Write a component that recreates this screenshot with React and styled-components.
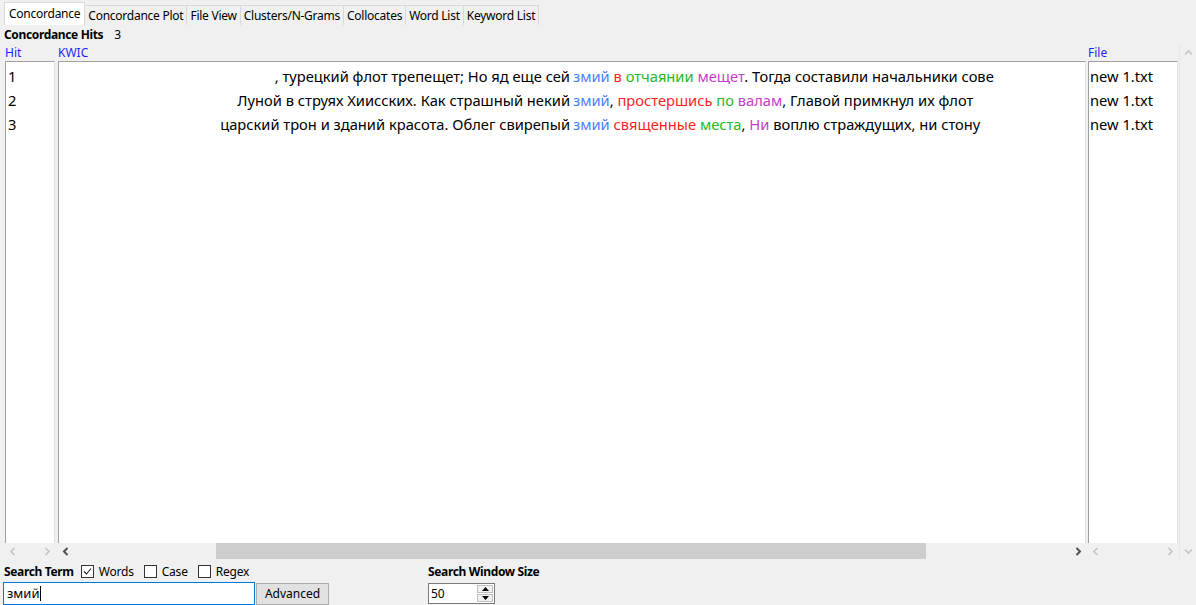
import React from "react";
import styled, { createGlobalStyle } from "styled-components";

const GlobalStyle = createGlobalStyle`
  html, body {
    margin: 0;
    padding: 0;
    background: #f0f0f0;
  }
  body {
    font-family: "Noto Sans", "Open Sans", sans-serif;
    color: #000;
  }
`;

const Window = styled.div`
  width: 1196px;
  height: 605px;
  overflow: hidden;
  display: flex;
  flex-direction: column;
  background: #f0f0f0;
`;

const TabBar = styled.div`
  display: flex;
  align-items: flex-end;
  height: 25px;
  padding-left: 5px;
  box-sizing: border-box;
`;

const Tab = styled.div`
  font-size: 12px;
  letter-spacing: -0.25px;
  height: ${(p) => (p.$active ? "22px" : "19px")};
  line-height: ${(p) => (p.$active ? "22px" : "19px")};
  padding: 0 ${(p) => (p.$active ? "4px" : "3px")};
  background: ${(p) => (p.$active ? "#fff" : "#f0f0f0")};
  border: 1px solid #d9d9d9;
  border-bottom: none;
  margin-left: -1px;
  white-space: nowrap;
`;

const HitsBar = styled.div`
  display: flex;
  align-items: center;
  gap: 11px;
  height: 19px;
  padding-left: 4px;
  font-size: 12px;
`;

const Bold = styled.span`
  font-weight: 700;
  letter-spacing: -0.35px;
  margin-left: ${(p) => p.$ml || 0}px;
`;

const Table = styled.div`
  display: flex;
  height: 517px;
  padding-left: 5px;
`;

const Column = styled.div`
  display: flex;
  flex-direction: column;
  width: ${(p) => p.$w}px;
  margin-right: ${(p) => p.$gap || 0}px;
`;

const Header = styled.div`
  height: 17px;
  padding-top: 1px;
  box-sizing: border-box;
  line-height: 16px;
  font-size: 12px;
  color: #1f1fff;
`;

const Body = styled.div`
  flex: 1;
  background: #fff;
  border-top: 1px solid #a0a0a0;
  border-left: 1px solid #a0a0a0;
  border-right: 1px solid #e3e3e3;
  padding-top: 2px;
  font-size: 14.7px;
  box-sizing: border-box;
  overflow: hidden;
`;

const Row = styled.div`
  height: 24px;
  line-height: 24px;
  padding-left: ${(p) => p.$pad || 0}px;
  white-space: nowrap;
`;

const KwicRow = styled.div`
  display: grid;
  grid-template-columns: 1fr 1fr;
  column-gap: 4px;
  height: 24px;
  line-height: 24px;
  white-space: nowrap;
`;

const Left = styled.div`
  text-align: right;
  overflow: hidden;
`;

const Right = styled.div`
  text-align: left;
  overflow: hidden;
  margin-left: -1px;
`;

const Word = styled.span`
  color: ${(p) => p.$c};
`;

const HScroll = styled.div`
  height: 16px;
  display: flex;
  align-items: center;
`;

const ArrowBox = styled.div`
  width: 16px;
  height: 16px;
  display: flex;
  align-items: center;
  justify-content: center;
  flex: none;
`;

const Track = styled.div`
  flex: 1;
  height: 16px;
  display: flex;
`;

const Thumb = styled.div`
  margin-left: ${(p) => p.$left}px;
  width: ${(p) => p.$width}px;
  height: 16px;
  background: #cdcdcd;
`;

const VScroll = styled.div`
  width: 17px;
  margin-left: 1px;
  border-left: 1px solid #e6e6e6;
  display: flex;
  flex-direction: column;
  justify-content: space-between;
  align-items: center;
  padding: 5px 0 0;
  box-sizing: border-box;
`;

const Controls = styled.div`
  display: flex;
  padding-top: 3px;
`;

const Group = styled.div`
  display: flex;
  flex-direction: column;
  width: ${(p) => p.$w}px;
  padding-left: ${(p) => p.$pad || 0}px;
`;

const LabelRow = styled.div`
  display: flex;
  align-items: center;
  height: 18px;
  font-size: 12px;
  gap: 5px;
`;

const Check = styled.label`
  display: flex;
  align-items: center;
  gap: 5px;
  letter-spacing: -0.2px;
  margin-left: ${(p) => p.$ml || 0}px;
`;

const Box = styled.span`
  width: 11px;
  height: 11px;
  border: 1px solid #333;
  background: #fff;
  display: flex;
  align-items: center;
  justify-content: center;
`;

const InputRow = styled.div`
  display: flex;
  align-items: flex-start;
  margin-top: 2px;
`;

const SearchInput = styled.div`
  width: 252px;
  height: 23px;
  border: 1px solid #0078d7;
  background: #fff;
  box-sizing: border-box;
  font-size: 13px;
  line-height: 21px;
  padding-left: 3px;
  display: flex;
  align-items: center;
`;

const Caret = styled.span`
  width: 1px;
  height: 15px;
  background: #000;
  margin-left: 1px;
`;

const Button = styled.div`
  width: 73px;
  height: 22px;
  margin-top: 1px;
  margin-left: 1px;
  background: #e1e1e1;
  border: 1px solid #adadad;
  box-sizing: border-box;
  font-size: 12px;
  line-height: 20px;
  text-align: center;
`;

const Spinner = styled.div`
  width: 67px;
  height: 21px;
  margin-top: 1px;
  border: 1px solid #7a7a7a;
  background: #fff;
  box-sizing: border-box;
  display: flex;
  font-size: 12px;
`;

const SpinValue = styled.div`
  flex: 1;
  padding-left: 2px;
  line-height: 19px;
`;

const SpinButtons = styled.div`
  width: 16px;
  display: flex;
  flex-direction: column;
  gap: 1px;
  padding: 1px 1px 1px 0;
`;

const SpinBtn = styled.div`
  flex: 1;
  background: #f0f0f0;
  border: 1px solid #c0c0c0;
  display: flex;
  align-items: center;
  justify-content: center;
`;

const Chevron = ({ dir, dark }) => {
  const c = dark ? "#505050" : "#c4c4c4";
  const paths = {
    left: "M5.5 1 L2 4.5 L5.5 8",
    right: "M2.5 1 L6 4.5 L2.5 8",
    up: "M1 5.5 L4.5 2 L8 5.5",
    down: "M1 2.5 L4.5 6 L8 2.5",
  };
  return (
    <svg width="9" height="9" viewBox="0 0 9 9">
      <path d={paths[dir]} fill="none" stroke={c} strokeWidth={dark ? 2 : 1.6} />
    </svg>
  );
};

const Tri = ({ up }) => (
  <svg width="7" height="4" viewBox="0 0 7 4">
    <path d={up ? "M0 4 L3.5 0 L7 4 Z" : "M0 0 L3.5 4 L7 0 Z"} fill="#000" />
  </svg>
);

const BLUE = "#4a7ff5";
const RED = "#ff1f1f";
const GREEN = "#25b825";
const MAG = "#c63dc6";

const rows = [
  {
    left: ", турецкий флот трепещет; Но яд еще сей",
    right: [
      ["змий", BLUE],
      [" "],
      ["в", RED],
      [" "],
      ["отчаянии", GREEN],
      [" "],
      ["мещет", MAG],
      [". Тогда составили начальники сове"],
    ],
  },
  {
    left: "Луной в струях Хиисских. Как страшный некий",
    right: [
      ["змий", BLUE],
      [", "],
      ["простершись", RED],
      [" "],
      ["по", GREEN],
      [" "],
      ["валам", MAG],
      [", Главой примкнул их флот"],
    ],
  },
  {
    left: "царский трон и зданий красота. Облег свирепый",
    right: [
      ["змий", BLUE],
      [" "],
      ["священные", RED],
      [" "],
      ["места", GREEN],
      [", "],
      ["Ни", MAG],
      [" воплю страждущих, ни стону"],
    ],
  },
];

const tabs = [
  "Concordance",
  "Concordance Plot",
  "File View",
  "Clusters/N-Grams",
  "Collocates",
  "Word List",
  "Keyword List",
];

function ScrollBar({ dark, thumb }) {
  return (
    <HScroll>
      <ArrowBox>
        <Chevron dir="left" dark={dark} />
      </ArrowBox>
      <Track>{thumb && <Thumb $left={thumb[0]} $width={thumb[1]} />}</Track>
      <ArrowBox>
        <Chevron dir="right" dark={dark} />
      </ArrowBox>
    </HScroll>
  );
}

const CheckMark = () => (
  <svg width="9" height="9" viewBox="0 0 9 9">
    <path d="M1 4.5 L3.5 7 L8 1.5" fill="none" stroke="#222" strokeWidth="1.1" />
  </svg>
);

export default function App() {
  return (
    <Window>
      <GlobalStyle />
      <TabBar>
        {tabs.map((t, i) => (
          <Tab key={t} $active={i === 0}>
            {t}
          </Tab>
        ))}
      </TabBar>
      <HitsBar>
        <Bold>Concordance Hits</Bold>
        <span>3</span>
      </HitsBar>
      <Table>
        <Column $w={50} $gap={3}>
          <Header>Hit</Header>
          <Body>
            {rows.map((_, i) => (
              <Row key={i} $pad={2}>
                {i + 1}
              </Row>
            ))}
          </Body>
          <ScrollBar />
        </Column>
        <Column $w={1028} $gap={2}>
          <Header>KWIC</Header>
          <Body>
            {rows.map((r, i) => (
              <KwicRow key={i}>
                <Left>{r.left}</Left>
                <Right>
                  {r.right.map(([w, c], j) =>
                    c ? (
                      <Word key={j} $c={c}>
                        {w}
                      </Word>
                    ) : (
                      <span key={j}>{w}</span>
                    )
                  )}
                </Right>
              </KwicRow>
            ))}
          </Body>
          <ScrollBar dark thumb={[142, 710]} />
        </Column>
        <Column $w={90}>
          <Header>File</Header>
          <Body>
            {rows.map((_, i) => (
              <Row key={i} $pad={1}>
                new 1.txt
              </Row>
            ))}
          </Body>
          <ScrollBar />
        </Column>
        <VScroll>
          <Chevron dir="up" />
          <ArrowBox>
            <Chevron dir="down" />
          </ArrowBox>
        </VScroll>
      </Table>
      <Controls>
        <Group $w={425} $pad={3}>
          <LabelRow>
            <Bold $ml={1}>Search Term</Bold>
            <Check $ml={2}>
              <Box>
                <CheckMark />
              </Box>
              Words
            </Check>
            <Check $ml={5}>
              <Box />
              Case
            </Check>
            <Check $ml={5}>
              <Box />
              Regex
            </Check>
          </LabelRow>
          <InputRow>
            <SearchInput>
              змий
              <Caret />
            </SearchInput>
            <Button>Advanced</Button>
          </InputRow>
        </Group>
        <Group $w={200}>
          <LabelRow>
            <Bold>Search Window Size</Bold>
          </LabelRow>
          <InputRow>
            <Spinner>
              <SpinValue>50</SpinValue>
              <SpinButtons>
                <SpinBtn>
                  <Tri up />
                </SpinBtn>
                <SpinBtn>
                  <Tri />
                </SpinBtn>
              </SpinButtons>
            </Spinner>
          </InputRow>
        </Group>
      </Controls>
    </Window>
  );
}
